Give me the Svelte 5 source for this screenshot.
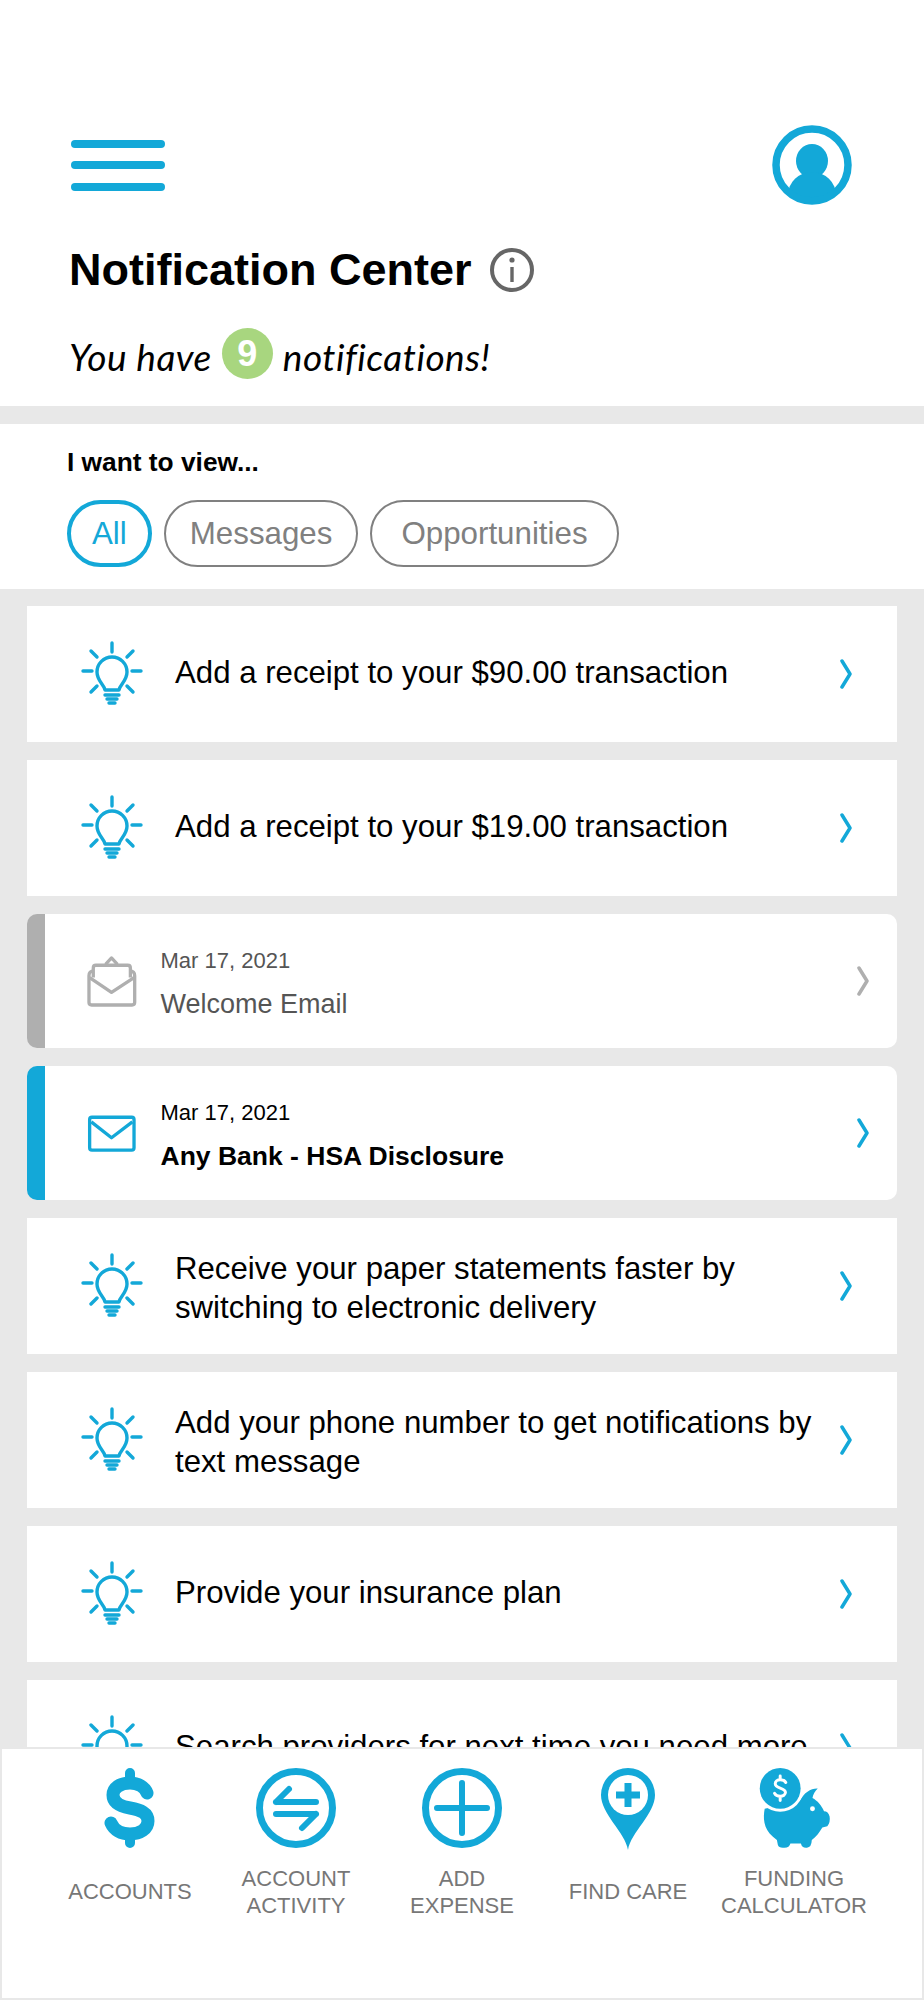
<script>
    const items = [
        { kind: 'tip', text: 'Add a receipt to your $90.00 transaction' },
        { kind: 'tip', text: 'Add a receipt to your $19.00 transaction' },
        { kind: 'read', date: 'Mar 17, 2021', text: 'Welcome Email' },
        { kind: 'unread', date: 'Mar 17, 2021', text: 'Any Bank - HSA Disclosure' },
        { kind: 'tip', two: true, text: 'Receive your paper statements faster by switching to electronic delivery' },
        { kind: 'tip', two: true, text: 'Add your phone number to get notifications by text message' },
        { kind: 'tip', text: 'Provide your insurance plan' },
        { kind: 'tip', text: 'Search providers for next time you need more' }
    ];
    const filters = ['All', 'Messages', 'Opportunities'];
</script>

<div class="page">
    <header class="head">
        <div class="top">
            <div class="burger"><span></span><span></span><span></span></div>
            <svg class="avatar" viewBox="0 0 80 80" width="80" height="80">
                <defs>
                    <clipPath id="avatar-clip"><circle cx="40" cy="40" r="36" /></clipPath>
                </defs>
                <g clip-path="url(#avatar-clip)" fill="#13a8d8">
                    <ellipse cx="40" cy="36" rx="16" ry="17" />
                    <ellipse cx="40" cy="70" rx="24" ry="23" />
                </g>
                <circle cx="40" cy="40" r="36" fill="none" stroke="#13a8d8" stroke-width="7.5" />
            </svg>
        </div>
        <div class="title">
            <h1>Notification Center</h1>
            <svg viewBox="0 0 44 44" width="44" height="44" fill="none" stroke="#666">
                <circle cx="22" cy="22" r="20" stroke-width="4" />
                <path d="M22 19v15" stroke-width="3.4" />
                <circle cx="22" cy="12" r="2.6" fill="#666" stroke="none" />
            </svg>
        </div>
        <p class="count">You have <span class="badge">9</span> notifications!</p>
    </header>

    <section class="filter">
        <div class="label">I want to view...</div>
        <div class="pills">
            {#each filters as f, i}
                <button class="pill" class:on={i === 0}>{f}</button>
            {/each}
        </div>
    </section>

    <main class="list">
        {#each items as item}
            {#if item.kind === 'tip'}
                <div class="card tip">
                    <svg class="bulb" viewBox="0 0 64 68" width="64" height="68" fill="none" stroke="#13a8d8" stroke-width="3.4" stroke-linecap="round" stroke-linejoin="round">
                        <path d="M32 2v9M3 30h9M52 30h9M11 10l6 6M53 10l-6 6M11 51l6-6M53 51l-6-6" />
                        <path d="M25 49c-1-6-8-9-8-18a15 15 0 0 1 30 0c0 9-7 12-8 18z" />
                        <path d="M25 54h14M27 58h10M29 62h6" />
                    </svg>
                    <div class="text" class:two={item.two}>{item.text}</div>
                    <svg class="chev" viewBox="0 0 14 30" width="14" height="30" fill="none" stroke="#13a8d8" stroke-width="3.5" stroke-linecap="round" stroke-linejoin="round"><path d="M3 2l8 13-8 13" /></svg>
                </div>
            {:else}
                <div class="card msg {item.kind}">
                    {#if item.kind === 'read'}
                        <svg class="env" viewBox="190 137 166 160" width="55" height="53" fill="none" stroke="#afafaf" stroke-width="10" stroke-linejoin="round">
                            <path d="M220 185Q205 185 205 200V280Q205 288 213 288H335Q343 288 343 280V200Q343 185 328 185" />
                            <path d="M207 205L273 250L341 205" />
                            <path d="M218 205V176q0-8 8-8H322q8 0 8 8V205" />
                            <path d="M255 165L273 146L291 165" />
                        </svg>
                    {:else}
                        <svg class="env" viewBox="190 593 166 160" width="55" height="53" fill="none" stroke="#13a8d8" stroke-width="10" stroke-linejoin="round">
                            <rect x="207" y="624" width="134" height="99" rx="7" />
                            <path d="M212 638L273 686L336 638" />
                        </svg>
                    {/if}
                    <div class="body">
                        <div class="date">{item.date}</div>
                        <div class="name">{item.text}</div>
                    </div>
                    <svg class="chev" viewBox="0 0 14 30" width="14" height="30" fill="none" stroke={item.kind === 'read' ? '#afafaf' : '#13a8d8'} stroke-width="3.5" stroke-linecap="round" stroke-linejoin="round"><path d="M3 2l8 13-8 13" /></svg>
                </div>
            {/if}
        {/each}
    </main>

    <nav class="nav">
        <div class="tab">
            <svg viewBox="0 0 60 84" width="60" height="84" fill="none" stroke="#13a8d8" stroke-linecap="round">
                <path d="M30 7v8M30 69v8" stroke-width="10" />
                <path d="M47 27c-2-6-9-10-17-10-10 0-17 5-17 12 0 7 6 11 17 13 11 2 18 5 18 13 0 8-8 13-18 13-9 0-16-4-19-11" stroke-width="13" stroke-linecap="round" />
            </svg>
            <span>ACCOUNTS</span>
        </div>
        <div class="tab">
            <svg viewBox="0 0 84 84" width="84" height="84" fill="none" stroke="#13a8d8" stroke-linecap="round" stroke-linejoin="round">
                <circle cx="42" cy="42" r="36.5" stroke-width="7" />
                <path d="M22 36h40M22 36l13-13M22 48h40M62 48L48 62" stroke-width="6" />
            </svg>
            <span>ACCOUNT ACTIVITY</span>
        </div>
        <div class="tab">
            <svg viewBox="0 0 84 84" width="84" height="84" fill="none" stroke="#13a8d8" stroke-linecap="round">
                <circle cx="42" cy="42" r="36.5" stroke-width="7" />
                <path d="M17 42h50M42 17v50" stroke-width="6" />
            </svg>
            <span>ADD EXPENSE</span>
        </div>
        <div class="tab">
            <svg viewBox="0 0 60 84" width="60" height="84">
                <path d="M30 84C27 66 3 48 3 29a27 27 0 0 1 54 0c0 19-24 37-27 55z" fill="#13a8d8" />
                <circle cx="30" cy="29" r="20" fill="#fff" />
                <path d="M30 17v24M18 29h24" stroke="#13a8d8" stroke-width="7" />
            </svg>
            <span>FIND CARE</span>
        </div>
        <div class="tab">
            <svg class="pig" viewBox="90 75 220 255" width="74" height="84">
                <path fill="#13a8d8" d="M105 205C100 230 100 265 130 290L142 300L145 315Q148 325 165 323Q180 323 183 310L215 310Q218 324 232 323Q247 324 248 300C262 290 272 275 280 262L295 258Q305 245 302 228Q298 212 285 212C278 195 265 180 250 172C252 160 258 150 266 143C245 142 225 155 212 180Z" />
                <circle cx="152" cy="143" r="71" fill="#fff" />
                <circle cx="152" cy="143" r="62" fill="#13a8d8" />
                <circle cx="250" cy="205" r="7.5" fill="#fff" />
                <path d="M169 125c-3-6-10-8-17-8-9 0-15 5-15 12 0 7 6 10 15 13 9 3 16 6 16 13 0 7-7 12-16 12-8 0-14-3-17-9M152 105v10M152 170v10" fill="none" stroke="#fff" stroke-width="9" stroke-linecap="round" />
            </svg>
            <span>FUNDING CALCULATOR</span>
        </div>
    </nav>
</div>

<style>
    :global(body) {
        margin: 0;
        background: #e8e8e8;
    }

    .page {
        width: 924px;
        height: 2000px;
        display: flex;
        flex-direction: column;
        overflow: hidden;
        background: #e8e8e8;
        font-family: 'Liberation Sans', Arial, sans-serif;
    }

    .head {
        background: #fff;
        height: 406px;
        box-sizing: border-box;
        padding: 125px 72px 0 69px;
        flex: none;
    }

    .top {
        display: flex;
        justify-content: space-between;
        align-items: center;
        height: 80px;
    }

    .burger {
        width: 94px;
        margin-left: 2px;
        display: flex;
        flex-direction: column;
        gap: 13.5px;
    }

    .burger span {
        height: 8px;
        border-radius: 4px;
        background: #13a8d8;
    }

    .title {
        display: flex;
        align-items: center;
        gap: 18px;
        margin-top: 40px;
        height: 50px;
    }

    h1 {
        margin: 0;
        font-size: 45px;
        font-weight: 700;
        color: #000;
    }

    .count {
        margin: 35px 0 0;
        font-family: Lato, sans-serif;
        font-style: italic;
        font-size: 37px;
        letter-spacing: 0.5px;
        color: #000;
        display: flex;
        align-items: center;
        height: 52px;
    }

    .badge {
        width: 51px;
        height: 51px;
        border-radius: 50%;
        background: #a8d67f;
        color: #fff;
        font-family: 'Liberation Sans', sans-serif;
        font-style: normal;
        font-weight: 700;
        font-size: 36px;
        letter-spacing: 0;
        display: flex;
        align-items: center;
        justify-content: center;
        margin: 0 10px 5px;
    }

    .filter {
        background: #fff;
        margin-top: 18px;
        height: 165px;
        box-sizing: border-box;
        padding: 24px 67px 0;
        flex: none;
    }

    .label {
        font-size: 26.3px;
        font-weight: 700;
        color: #000;
        line-height: 28px;
    }

    .pills {
        display: flex;
        gap: 12px;
        margin-top: 24px;
    }

    .pill {
        height: 67px;
        padding: 0 24px;
        border: 2px solid #808080;
        border-radius: 33.5px;
        background: #fff;
        color: #808080;
        font: 31.3px 'Liberation Sans', Arial, sans-serif;
    }

    .pill:last-child {
        padding: 0 29px;
    }

    .pill.on {
        border: 4px solid #13a8d8;
        color: #13a8d8;
        padding: 0 21px;
    }

    .list {
        flex: 1;
        min-height: 0;
        overflow: hidden;
        padding: 17px 27px 0;
        display: flex;
        flex-direction: column;
        gap: 18px;
    }

    .card {
        background: #fff;
        display: flex;
        align-items: center;
        flex: none;
        box-sizing: border-box;
    }

    .tip {
        height: 136px;
        padding: 0 44px 0 53px;
    }

    .bulb {
        flex: none;
        margin-top: 1px;
    }

    .text {
        flex: 1;
        margin-left: 31px;
        font-size: 31.2px;
        line-height: 39.5px;
        color: #000;
        margin-top: -2px;
    }

    .text.two {
        margin-top: 4px;
    }

    .chev {
        flex: none;
        margin-left: 12px;
    }

    .msg {
        height: 134px;
        border-radius: 10px;
        border-left: 18px solid #afafaf;
        padding: 0 27px 0 38.5px;
    }

    .msg.unread {
        border-left-color: #13a8d8;
    }

    .env {
        flex: none;
    }

    .body {
        flex: 1;
        margin: 5px 0 0 22px;
    }

    .date {
        font-size: 22px;
        line-height: 26px;
        color: #555;
    }

    .name {
        font-size: 27px;
        line-height: 32px;
        margin-top: 14px;
        color: #555;
    }

    .unread .date {
        color: #000;
    }

    .unread .name {
        color: #000;
        font-weight: 700;
        font-size: 26.5px;
    }

    .nav {
        flex: none;
        height: 253px;
        box-sizing: border-box;
        background: #fff;
        border: 2px solid #e8e8e8;
        padding: 17px 45px 0;
        display: grid;
        grid-template-columns: repeat(5, 166px);
        align-items: start;
    }

    .tab {
        display: flex;
        flex-direction: column;
        align-items: center;
    }

    .pig {
        margin-left: 4px;
    }

    .tab span {
        height: 54px;
        max-width: 152px;
        margin-top: 15.5px;
        display: flex;
        align-items: center;
        text-align: center;
        font-size: 22px;
        line-height: 26.5px;
        color: #777;
    }
</style>
